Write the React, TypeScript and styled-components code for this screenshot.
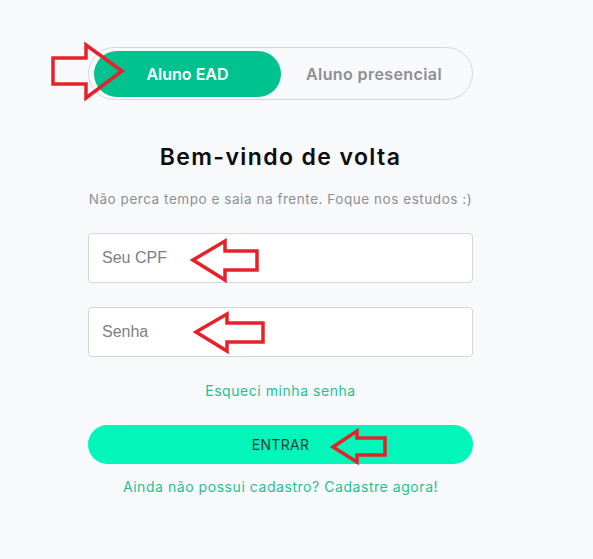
import React from 'react';
import styled, { createGlobalStyle } from 'styled-components';

const GlobalStyle = createGlobalStyle`
  html, body {
    margin: 0;
    padding: 0;
    background: #f8f9fb;
    font-family: 'Inter', 'Noto Sans', sans-serif;
  }
`;

const Page = styled.div`
  position: relative;
  width: 593px;
  height: 559px;
  overflow: hidden;
  background: #f8f9fb;
`;

const Column = styled.div`
  width: 385px;
  margin-left: 88px;
  padding-top: 47px;
  display: flex;
  flex-direction: column;
  align-items: stretch;
`;

const Toggle = styled.div`
  height: 53px;
  box-sizing: border-box;
  border: 1px solid #d4d7dd;
  border-radius: 27px;
  padding: 3px 5px;
  display: flex;
  align-items: center;
`;

const ToggleOption = styled.button<{ $active?: boolean }>`
  flex: ${(p) => (p.$active ? '0 0 187px' : '1')};
  height: 46px;
  border: none;
  border-radius: 23px;
  background: ${(p) => (p.$active ? '#00c28f' : 'transparent')};
  color: ${(p) => (p.$active ? '#ffffff' : '#8c8f96')};
  font-family: inherit;
  font-size: 16px;
  font-weight: 600;
  letter-spacing: ${(p) => (p.$active ? '0' : '0.4px')};
  cursor: pointer;
`;

const Title = styled.h2`
  margin: 43px 0 0;
  text-align: center;
  font-size: 23px;
  font-weight: 600;
  letter-spacing: 1.4px;
  color: #0c0c0c;
  line-height: 28px;
`;

const Subtitle = styled.p`
  margin: 19px 0 0;
  text-align: center;
  font-size: 13.5px;
  letter-spacing: 0.55px;
  color: #8a8f99;
  line-height: 18px;
`;

const Input = styled.input<{ $gap: number }>`
  margin-top: ${(p) => p.$gap}px;
  height: 50px;
  box-sizing: border-box;
  border: 1px solid #d3d6dc;
  border-radius: 4px;
  background: #ffffff;
  padding: 0 13px;
  font-family: 'Liberation Sans', Arial, sans-serif;
  font-size: 16px;
  color: #333;
  &::placeholder {
    color: #7b7f86;
  }
`;

const TextLink = styled.a<{ $gap: number }>`
  display: block;
  margin-top: ${(p) => p.$gap}px;
  text-align: center;
  font-size: 14px;
  letter-spacing: 0.55px;
  color: #1fc096;
  line-height: 18px;
  text-decoration: none;
  cursor: pointer;
`;

const SubmitButton = styled.button`
  margin-top: 25px;
  height: 39px;
  border: none;
  border-radius: 20px;
  background: #02f5b9;
  color: #2f3a36;
  font-family: inherit;
  font-size: 14px;
  letter-spacing: 0.3px;
  cursor: pointer;
`;

const Annotations = styled.svg`
  position: absolute;
  left: 0;
  top: 0;
  pointer-events: none;
`;

const arrows = [
  '53,58 86,58 86,45 122,71 86,98 86,84 53,84',
  '193,260 225,241 225,251 257,251 257,270 225,270 225,280',
  '196,332 227,314 227,323 263,323 263,342 227,342 227,351',
  '333,447 357,431 357,438 385,438 385,455 357,455 357,462',
];

export default function App() {
  return (
    <Page>
      <GlobalStyle />
      <Column>
        <Toggle>
          <ToggleOption $active>Aluno EAD</ToggleOption>
          <ToggleOption>Aluno presencial</ToggleOption>
        </Toggle>
        <Title>Bem-vindo de volta</Title>
        <Subtitle>Não perca tempo e saia na frente. Foque nos estudos :)</Subtitle>
        <Input $gap={25} placeholder="Seu CPF" />
        <Input $gap={24} type="password" placeholder="Senha" />
        <TextLink $gap={25}>Esqueci minha senha</TextLink>
        <SubmitButton>ENTRAR</SubmitButton>
        <TextLink $gap={14}>Ainda não possui cadastro? Cadastre agora!</TextLink>
      </Column>
      <Annotations width="593" height="559" viewBox="0 0 593 559">
        {arrows.map((pts) => (
          <polygon
            key={pts}
            points={pts}
            fill="none"
            stroke="#e8202a"
            strokeWidth="3.5"
            strokeLinejoin="miter"
          />
        ))}
      </Annotations>
    </Page>
  );
}
